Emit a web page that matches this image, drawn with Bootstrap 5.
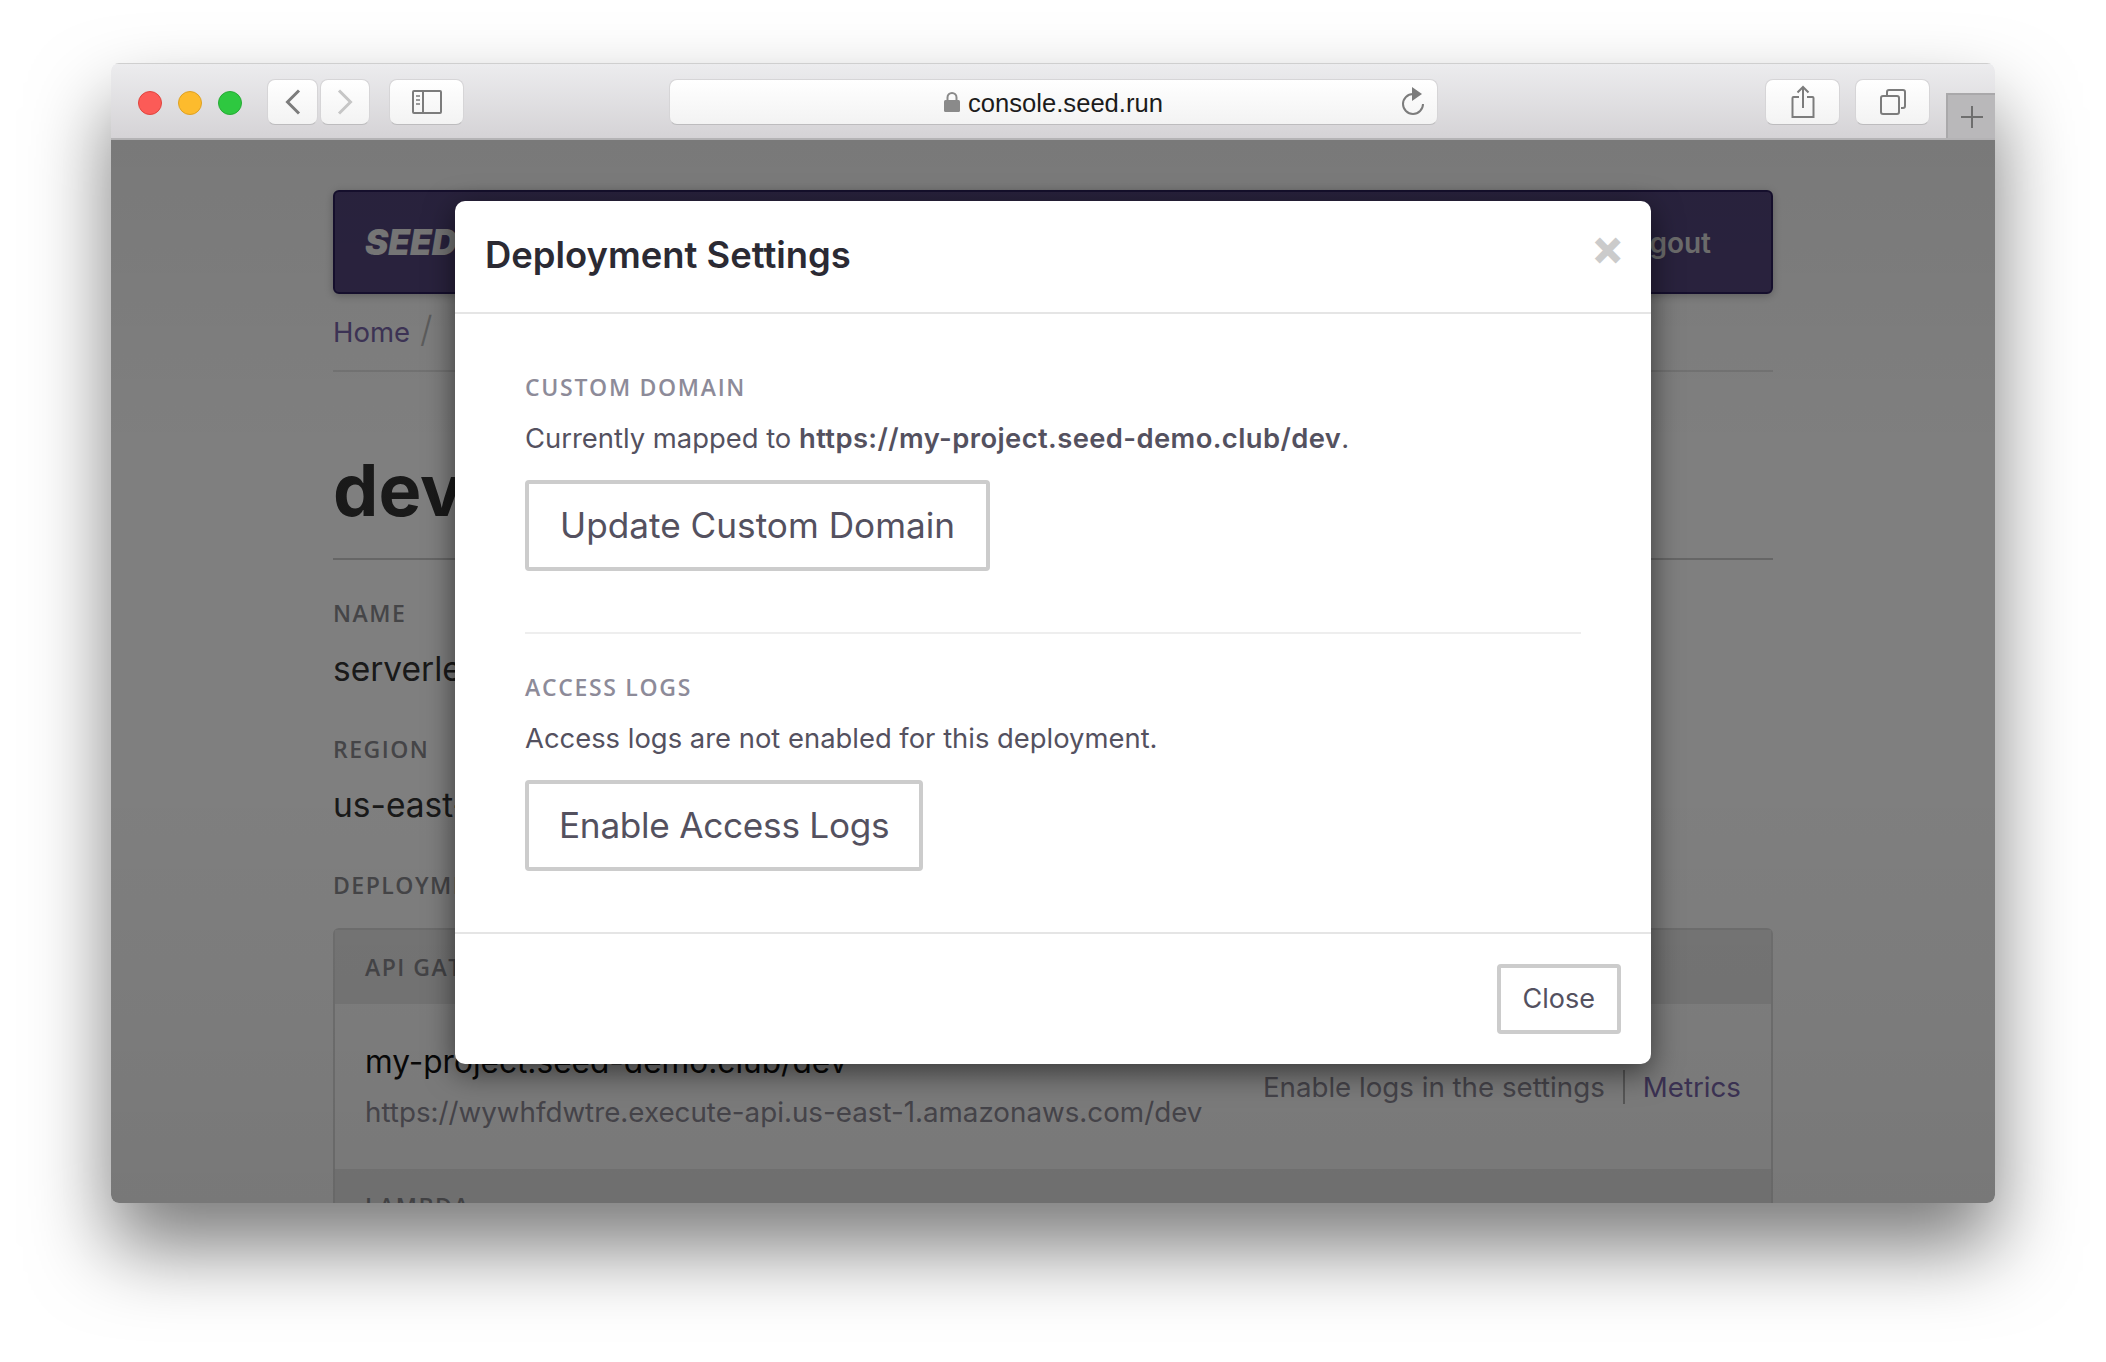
<!DOCTYPE html>
<html lang="en">
<head>
    <meta charset="UTF-8">
    <meta name="viewport" content="width=device-width, initial-scale=1">
    <title>Deployment Settings</title>
    <link href="https://cdn.jsdelivr.net/npm/bootstrap@5.3.0/dist/css/bootstrap.min.css" rel="stylesheet">
    <style>
        html, body { height: 100%; }
        body {
            background: #fff;
            font-family: Inter, "Noto Sans", sans-serif;
            overflow: hidden;
            padding: 63px 111px 0 111px;
        }
        .browser {
            position: relative;
            height: 1140px;
            border-radius: 8px;
            overflow: hidden;
            background: #fff;
        }
        .browser-wrap {
            border-radius: 8px;
            box-shadow: 0 44px 80px rgba(0, 0, 0, 0.52);
        }
        .toolbar {
            height: 77px;
            padding: 15px 0 0 27px;
            background: linear-gradient(#ececee, #d5d3d6);
            border-top: 1px solid #cfcfcf;
            border-bottom: 2px solid #b4b3b5;
            position: relative;
        }
        .light { width: 24px; height: 24px; border-radius: 50%; margin-top: 12px; }
        .light-red { background: #fc5b57; border: 1px solid #e0443e; }
        .light-amber { background: #fdbb2d; border: 1px solid #dea123; margin-left: 16px; }
        .light-green { background: #2ec840; border: 1px solid #27aa35; margin-left: 16px; }
        .tool {
            height: 46px;
            background: linear-gradient(#fff, #f3f3f3);
            border: 1px solid #d6d5d7;
            border-bottom-color: #bdbcbe;
            border-radius: 8px;
        }
        .tool-back { width: 51px; margin-left: 25px; }
        .tool-fwd { width: 50px; margin-left: 2px; }
        .tool-side { width: 75px; margin-left: 19px; }
        .tool-url {
            width: 769px;
            margin-left: 205px;
            font-family: "Liberation Sans", sans-serif;
            font-size: 25.600px;
            color: #1c1c1c;
            position: relative;
        }
        .tool-url span { padding-top: 2px; }
        .tool-share { width: 75px; margin-left: 327px; }
        .tool-tabs { width: 75px; margin-left: 15px; }
        .reload { position: absolute; right: 11px; top: 7px; }
        .new-tab {
            position: absolute;
            right: 0;
            bottom: 0;
            width: 49px;
            height: 45px;
            background: #b9b8ba;
            border-left: 2px solid #a9a8aa;
            border-top: 2px solid #a9a8aa;
        }
        .page {
            width: 1440px;
            margin: 0 auto;
            padding-top: 50px;
            color: #333;
            font-size: 31px;
        }
        .topbar {
            height: 104px;
            background: #54467e;
            border: 2px solid #2c1f5c;
            border-radius: 6px;
            padding: 0 60px 0 30px;
            box-shadow: 0 2px 8px rgba(0, 0, 0, 0.25);
        }
        .brand { font-weight: 900; font-style: italic; font-size: 35px; color: #f2f2f2; }
        .logout { font-weight: 600; font-size: 28px; color: #ddd; padding-top: 2px; }
        .crumbs { height: 78px; border-bottom: 2px solid #e6e6e6; padding-top: 13px; font-size: 27.500px; line-height: 44px; }
        .crumbs a, .metrics { color: #7a67ab; text-decoration: none; }
        .crumbs span { color: #bbb; margin-left: 10px; font-size: 36px; font-weight: 300; }
        .page-title { font-size: 72px; font-weight: 700; line-height: 100px; height: 188px; padding-top: 68px; border-bottom: 2px solid #ccc; margin: 0; color: #333; box-sizing: border-box; }
        .field-name { font-family: "Open Sans", sans-serif; font-weight: 600; font-size: 23px; letter-spacing: 1.500px; color: #8a8a8f; line-height: 30px; margin-top: 43px; }
        .field-first { margin-top: 38px; }
        .field-value { font-size: 33.500px; line-height: 44px; color: #333; margin-top: 19px; }
        .info-panel { margin-top: 28px; border: 2px solid #ddd; border-radius: 6px; }
        .info-head { height: 74px; background: #ebebeb; padding: 0 30px; line-height: 74px; margin: 0; }
        .info-row { height: 165px; padding: 36px 30px 0; }
        .info-main { font-size: 31.600px; line-height: 44px; color: #111; }
        .info-sub { font-size: 27.750px; line-height: 44px; color: #8f8c98; margin-top: 6px; }
        .info-side { font-size: 27.700px; color: #8f8c98; margin-top: 27px; }
        .info-side i { border-left: 2px solid #b3b3b3; margin: 0 18px 0 18px; }
        .shade { position: absolute; inset: 77px 0 0 0; background: linear-gradient(rgba(0, 0, 0, 0.525), rgba(0, 0, 0, 0.5) 30%, rgba(0, 0, 0, 0.5) 60%, rgba(0, 0, 0, 0.53)); }
        .sheet {
            position: absolute;
            left: 344px;
            top: 138px;
            width: 1196px;
            height: 863px;
        }
        .sheet .modal-content {
            height: 100%;
            background: #fff;
            border: 0;
            border-radius: 10px;
            box-shadow: 0 8px 30px rgba(0, 0, 0, 0.55);
            color: #54515f;
        }
        .sheet .modal-header {
            height: 113px;
            padding: 0 30px 2px;
            border-bottom: 2px solid #e5e5e5;
            border-radius: 0;
            position: relative;
        }
        .sheet .modal-title { font-size: 36.400px; font-weight: 600; color: #2b2a33; }
        .dismiss {
            position: absolute;
            right: 30px;
            top: 24px;
            font: 700 46px/50px "Liberation Sans", sans-serif;
            color: #cbcbcb;
            -webkit-text-stroke: 2px #cbcbcb;
        }
        .sheet .modal-body { padding: 59px 70px 62px; flex: none; height: 618px; }
        .sheet .modal-footer {
            height: 131px;
            padding: 30px 30px 29px;
            border-top: 2px solid #e5e5e5;
            border-radius: 0;
            align-items: flex-start;
        }
        .set-label { font-family: "Open Sans", sans-serif; font-weight: 600; font-size: 23px; line-height: 28px; letter-spacing: 1.700px; color: #8d8b99; margin-bottom: 17px; }
        .set-text { font-size: 27.400px; line-height: 40px; margin-bottom: 22px; }
        .set-text strong { font-weight: 600; letter-spacing: 0.400px; }
        .set-rule { height: 2px; background: #eee; margin: 61px 0 39px; }
        .btn-plain {
            height: 91px;
            padding: 0 31px;
            background: #fff;
            border: 4px solid #ccc;
            border-radius: 4px;
            color: #54515f;
            font-size: 35.200px;
            line-height: 83px;
        }
        .btn-tight { letter-spacing: -0.280px; padding: 0 30px; }
        .btn-plain-sm { height: 70px; padding: 0 22px; font-size: 27px; line-height: 62px; margin: 0; }
    </style>
</head>
<body>

<div class="browser-wrap">
<div class="browser">
    <div class="toolbar d-flex align-items-start">
        <div class="light light-red"></div>
        <div class="light light-amber"></div>
        <div class="light light-green"></div>

        <div class="tool tool-back d-flex align-items-center justify-content-center">
            <svg width="16" height="26" viewBox="0 0 16 26"><path d="M14 1.500 2.500 13 14 24.500" fill="none" stroke="#7c7c7c" stroke-width="3"/></svg>
        </div>
        <div class="tool tool-fwd d-flex align-items-center justify-content-center">
            <svg width="16" height="26" viewBox="0 0 16 26"><path d="M2 1.500 13.500 13 2 24.500" fill="none" stroke="#c6c6c6" stroke-width="3"/></svg>
        </div>
        <div class="tool tool-side d-flex align-items-center justify-content-center">
            <svg width="30" height="24" viewBox="0 0 30 24"><rect x="1" y="1" width="28" height="22" rx="1" fill="none" stroke="#7c7c7c" stroke-width="2"/><path d="M11 1v22" stroke="#7c7c7c" stroke-width="2"/><path d="M4 6h4M4 10h4M4 14h4" stroke="#9a9a9a" stroke-width="2"/></svg>
        </div>

        <div class="tool tool-url d-flex align-items-center justify-content-center gap-2">
            <svg width="16" height="20" viewBox="0 0 16 20"><rect x="0" y="8" width="16" height="12" rx="1.5" fill="#8a8a8a"/><path d="M3.5 8V5.5a4.5 4.5 0 0 1 9 0V8" fill="none" stroke="#8a8a8a" stroke-width="2"/></svg>
            <span>console.seed.run</span>
            <svg class="reload" width="26" height="30" viewBox="0 0 26 30"><path d="M13 7A10 10 0 1 0 23 17" fill="none" stroke="#7c7c7c" stroke-width="2"/><path d="M12 0l10 7-10 7z" fill="#7c7c7c"/></svg>
        </div>

        <div class="tool tool-share d-flex align-items-center justify-content-center">
            <svg width="24" height="34" viewBox="0 0 24 34"><path d="M8 12H2.500a1 1 0 0 0-1 1v19h21V13a1 1 0 0 0-1-1H16" fill="none" stroke="#7c7c7c" stroke-width="2"/><path d="M12 2v21M6.500 7.500 12 2l5.500 5.500" fill="none" stroke="#7c7c7c" stroke-width="2"/></svg>
        </div>
        <div class="tool tool-tabs d-flex align-items-center justify-content-center">
            <svg width="26" height="26" viewBox="0 0 26 26"><rect x="1" y="7" width="18" height="18" rx="2" fill="none" stroke="#7c7c7c" stroke-width="2"/><path d="M7 6V3a2 2 0 0 1 2-2h14a2 2 0 0 1 2 2v14a2 2 0 0 1-2 2h-2" fill="none" stroke="#7c7c7c" stroke-width="2"/></svg>
        </div>

        <div class="new-tab d-flex align-items-center justify-content-center">
            <svg width="22" height="22" viewBox="0 0 22 22"><path d="M11 0v22M0 11h22" stroke="#6e6e6e" stroke-width="2"/></svg>
        </div>
    </div>

    <div class="page">
        <div class="topbar d-flex align-items-center justify-content-between">
            <span class="brand">SEED</span>
            <span class="logout">Logout</span>
        </div>
        <div class="crumbs"><a href="#">Home</a><span>/</span></div>
        <h1 class="page-title">dev</h1>

        <div class="field-name field-first">NAME</div>
        <div class="field-value">serverless-app</div>
        <div class="field-name">REGION</div>
        <div class="field-value">us-east-1</div>
        <div class="field-name">DEPLOYMENT</div>

        <div class="info-panel">
            <div class="info-head field-name">API GATEWAY</div>
            <div class="info-row d-flex justify-content-between align-items-start">
                <div>
                    <div class="info-main">my-project.seed-demo.club/dev</div>
                    <div class="info-sub">https://wywhfdwtre.execute-api.us-east-1.amazonaws.com/dev</div>
                </div>
                <div class="info-side">Enable logs in the settings<i></i><a class="metrics" href="#">Metrics</a></div>
            </div>
            <div class="info-head field-name">LAMBDA</div>
        </div>
    </div>

    <div class="shade"></div>

    <div class="sheet">
        <div class="modal-content">
            <div class="modal-header">
                <h5 class="modal-title">Deployment Settings</h5>
                <span class="dismiss">×</span>
            </div>
            <div class="modal-body">
                <div class="set-label">CUSTOM DOMAIN</div>
                <p class="set-text">Currently mapped to <strong>https://my-project.seed-demo.club/dev</strong>.</p>
                <button type="button" class="btn btn-plain">Update Custom Domain</button>
                <div class="set-rule"></div>
                <div class="set-label">ACCESS LOGS</div>
                <p class="set-text">Access logs are not enabled for this deployment.</p>
                <button type="button" class="btn btn-plain btn-tight">Enable Access Logs</button>
            </div>
            <div class="modal-footer">
                <button type="button" class="btn btn-plain btn-plain-sm">Close</button>
            </div>
        </div>
    </div>
</div>
</div>

<script src="https://cdn.jsdelivr.net/npm/bootstrap@5.3.0/dist/js/bootstrap.bundle.min.js"></script>
</body>
</html>
